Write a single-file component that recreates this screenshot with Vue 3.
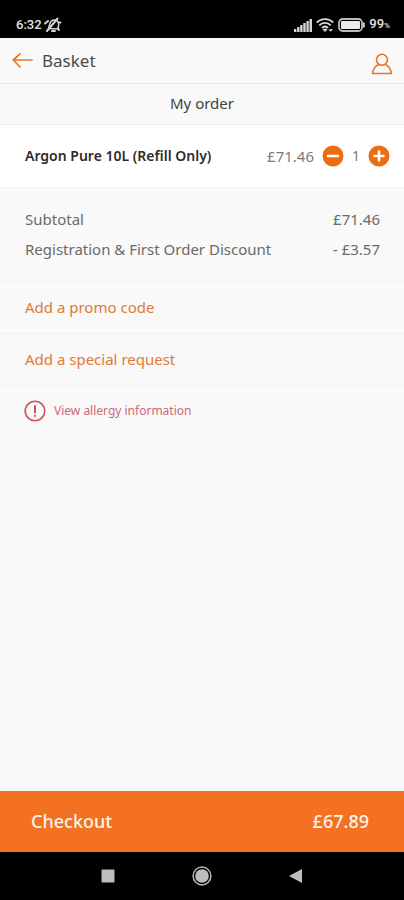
<script setup>
import { ref } from 'vue'

const quantity = ref(1)
const item = { name: 'Argon Pure 10L (Refill Only)', price: '£71.46' }
const totals = [
  { label: 'Subtotal', value: '£71.46' },
  { label: 'Registration & First Order Discount', value: '- £3.57' },
]
const actions = ['Add a promo code', 'Add a special request']
</script>

<template>
  <div class="screen">
    <div class="status">
      <span class="time">6:32</span>
      <svg width="18" height="16" viewBox="0 0 18 16" fill="none" stroke="#d2d2d2" stroke-linecap="round" stroke-linejoin="round">
        <path d="M4.500 11.500L5.500 8C6 5 8 3 10.500 3s4.200 2 4.200 4.500l-.7 4.500z" stroke-width="1.600" />
        <path d="M3 14L13.500 1.500M1 6.500l3-2.500M8 14h3M14 11.500l1 1.500M14.500 5.500h2" stroke-width="2" />
      </svg>
      <svg class="signal" width="18" height="13" viewBox="0 0 18 13" fill="#d6d6d6">
        <path d="M0 10h2.400v3H0zM3.100 8h2.400v5H3.100zM6.200 6h2.400v7H6.200zM9.300 4h2.400v9H9.300zM12.400 2h2.400v11h-2.400zM15.500 0H18v13h-2.500z" />
      </svg>
      <svg width="18" height="14" viewBox="0 0 18 14" fill="none" stroke="#dcdcdc" stroke-width="1.800">
        <path d="M.8 4.600c4.600-4.600 11.800-4.600 16.400 0M3.300 7.300c3.200-3.200 8.200-3.200 11.400 0M5.900 9.900c1.800-1.700 4.400-1.700 6.200 0" />
        <path d="M7 11.200h4L9 13.500zM13 11.500l1.500 1.700L16.500 11" fill="#dcdcdc" stroke-width="1" />
      </svg>
      <svg width="27" height="14" viewBox="0 0 27 14">
        <rect x="1" y="1" width="23" height="12" rx="3.500" fill="none" stroke="#bdbdbd" stroke-width="1.800" />
        <rect x="3" y="3" width="19" height="8" rx="1" fill="#ececec" />
        <path d="M25 4.500h1.800v5H25z" fill="#cfcfcf" />
      </svg>
      <span class="charge">99<small>%</small></span>
    </div>

    <header class="bar">
      <button class="icon-button" type="button" aria-label="Back">
        <svg width="22" height="16" viewBox="0 0 22 16" fill="none" stroke="#ee7426" stroke-width="1.700" stroke-linecap="round" stroke-linejoin="round">
          <path d="M20 7H1.500M8 .9L1.300 7 8 14" />
        </svg>
      </button>
      <h1>Basket</h1>
      <button class="icon-button account" type="button" aria-label="Account">
        <svg width="22" height="22" viewBox="0 0 22 22" fill="none" stroke="#ee7426" stroke-width="1.600" stroke-linejoin="round">
          <circle cx="11" cy="6.800" r="5.500" />
          <path d="M7.500 11.500C4.500 12.800 2.400 15.500 1.500 20.500h19c-.9-5-3-7.700-6-9" />
        </svg>
      </button>
    </header>

    <h2>My order</h2>

    <main>
      <section class="item">
        <span class="name">{{ item.name }}</span>
        <span class="price">{{ item.price }}</span>
        <button class="icon-button" type="button" aria-label="Remove one" @click="quantity = Math.max(0, quantity - 1)">
          <svg width="22" height="22" viewBox="0 0 22 22">
            <circle cx="11" cy="11" r="10.500" fill="#ee6c12" />
            <path d="M6 11h10" stroke="#fff" stroke-width="2.400" stroke-linecap="round" />
          </svg>
        </button>
        <span class="quantity">{{ quantity }}</span>
        <button class="icon-button" type="button" aria-label="Add one" @click="quantity++">
          <svg width="22" height="22" viewBox="0 0 22 22">
            <circle cx="11" cy="11" r="10.500" fill="#ee6c12" />
            <path d="M6.500 11h9M11 6.500v9" stroke="#fff" stroke-width="2.600" stroke-linecap="round" />
          </svg>
        </button>
      </section>

      <dl class="totals">
        <div v-for="row in totals" :key="row.label">
          <dt>{{ row.label }}</dt>
          <dd>{{ row.value }}</dd>
        </div>
      </dl>

      <button v-for="action in actions" :key="action" class="action" type="button">{{ action }}</button>

      <a class="allergy" href="#allergy">
        <svg width="22" height="22" viewBox="0 0 22 22" fill="none" stroke="#cf4f5a" stroke-width="1.600" stroke-linecap="round">
          <circle cx="11" cy="11" r="9.800" />
          <path d="M11 6v6.500M11 15.700v.2" stroke-width="2" />
        </svg>
        View allergy information
      </a>
    </main>

    <button class="checkout" type="button">
      <span>Checkout</span>
      <span>£67.89</span>
    </button>

    <nav class="system">
      <button class="icon-button" type="button" aria-label="Recent apps">
        <svg width="14" height="14" viewBox="0 0 14 14"><path d="M.5.500h13v13H.5z" fill="#bdbdbd" /></svg>
      </button>
      <button class="icon-button" type="button" aria-label="Home">
        <svg width="20" height="20" viewBox="0 0 20 20">
          <circle cx="10" cy="10" r="8.900" fill="none" stroke="#b5b5b5" stroke-width="1.500" />
          <circle cx="10" cy="10" r="6.800" fill="#bdbdbd" />
        </svg>
      </button>
      <button class="icon-button" type="button" aria-label="Back">
        <svg width="14" height="14" viewBox="0 0 14 14"><path d="M0 7L13 0v14z" fill="#bdbdbd" /></svg>
      </button>
    </nav>
  </div>
</template>

<style>
body {
  margin: 0;
  background: #f9f9f9;
}
</style>

<style scoped>
.screen {
  display: flex;
  flex-direction: column;
  min-height: 100vh;
  background: #f9f9f9;
  color: #6a6a6a;
  font-family: "Noto Sans", sans-serif;
  font-size: 15px;
  line-height: 20px;
}

button {
  border: 0;
  background: none;
  font: inherit;
  cursor: pointer;
}

svg {
  display: block;
}

.icon-button {
  display: flex;
  padding: 0;
}

.status {
  display: flex;
  align-items: center;
  gap: 4px;
  height: 26px;
  padding: 12px 14px 0 16px;
  background: #000;
  color: #e2e2e2;
  font-family: Roboto, sans-serif;
  font-size: 13px;
  font-weight: 500;
}

.time {
  margin-right: -2px;
}

.signal {
  margin-left: auto;
}

.charge small {
  font-size: 8px;
}

.bar {
  display: flex;
  align-items: center;
  gap: 8px;
  height: 45px;
  padding: 0 11px 0 12px;
  border-bottom: 1px solid #ececec;
}

.account {
  padding-top: 6px;
}

h1 {
  flex: 1;
  margin: 0;
  color: #4a4a4a;
  font-size: 17px;
  font-weight: 400;
}

h2 {
  margin: 0;
  padding: 9px 0 11px;
  border-bottom: 1px solid #ececec;
  color: #404040;
  font-size: 15px;
  font-weight: 400;
  text-align: center;
}

main {
  display: flex;
  flex: 1;
  flex-direction: column;
}

.item {
  display: flex;
  align-items: center;
  gap: 8px;
  padding: 20px 14px 20px 25px;
  border-bottom: 1px solid #f2f2f2;
  background: #fff;
}

.name {
  flex: 1;
  color: #2c2c2c;
  font-size: 14px;
  font-weight: 600;
}

.price,
.quantity {
  color: #7c7c7c;
}

.quantity {
  min-width: 8px;
  font-size: 14px;
  text-align: center;
}

.totals {
  display: flex;
  flex-direction: column;
  gap: 10px;
  margin: 0;
  padding: 21px 24px 22px 25px;
  border-bottom: 1px solid #efefef;
}

.totals div {
  display: flex;
  justify-content: space-between;
}

dd {
  margin: 0;
}

.action {
  padding: 15px 25px 16px;
  border-bottom: 1px solid #efefef;
  color: #e27935;
  text-align: left;
}

.allergy {
  display: flex;
  align-items: center;
  gap: 8px;
  padding: 14px 24px;
  color: #d0667a;
  font-size: 12px;
  text-decoration: none;
}

.checkout {
  display: flex;
  align-items: center;
  justify-content: space-between;
  padding: 20px 35px 21px 31px;
  background: #f37120;
  color: #fff3e8;
  font-size: 18px;
  font-weight: 500;
}

.system {
  display: flex;
  align-items: center;
  justify-content: center;
  gap: 77px;
  height: 48px;
  background: #000;
}
</style>
